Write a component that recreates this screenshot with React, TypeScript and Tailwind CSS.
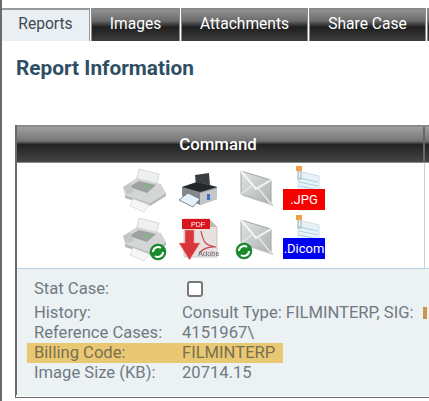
import React from "react";

const tabClass =
  "flex items-center justify-center h-[33px] pb-[2px] shrink-0 border-t-2 border-x border-[#8a8a8a] text-white text-[15.6px] bg-[linear-gradient(#929292_0%,#6a6a6a_35%,#1f1f1f_55%,#3d3d3d_100%)]";

const Badge = ({ cx, cy }: { cx: number; cy: number }) => (
  <g>
    <circle cx={cx} cy={cy} r="8" fill="#1a8c2c" stroke="#0f6a1d" strokeWidth="0.5" />
    <path
      d={`M${cx - 5} ${cy} a5 5 0 0 1 8 -4 M${cx + 5} ${cy} a5 5 0 0 1 -8 4`}
      fill="none"
      stroke="#fff"
      strokeWidth="2"
    />
  </g>
);

const Fax = ({ badge }: { badge?: boolean }) => (
  <svg width="46" height="46" viewBox="0 0 46 46" className="blur-[0.5px]">
    <path d="M17 2 L37 7 L34 20 L14 15 Z" fill="#eef0ef" stroke="#d5d8d7" />
    <path d="M1 20 L15 11 L39 17 L44 26 L28 36 L3 28 Z" fill="#d3d6d4" />
    <path d="M7 20 L17 14 L34 18 L25 26 Z" fill="#9ca29e" />
    <path d="M3 28 L28 36 L44 26 L44 29 L28 39 L3 31 Z" fill="#b4b8b6" />
    <path d="M1 20 L8 16 L12 25 L5 27 Z" fill="#c2c6c4" />
    <path d="M11 32 L27 38 L22 45 L8 39 Z" fill="#f5f6f6" stroke="#dfe1e1" />
    <path d="M22 18 L28 19 L27 21 L21 20 Z" fill="#7dbb83" />
    {badge && <Badge cx={36} cy={36} />}
  </svg>
);

const Printer = () => (
  <svg width="40" height="36" viewBox="0 0 40 36" className="blur-[0.3px]">
    <path d="M16 3 L30 1 L31 14 L17 14 Z" fill="#3a3d40" />
    <path d="M3 15 L18 10 L38 15 L38 27 L21 33 L3 24 Z" fill="#83888d" />
    <path d="M3 15 L21 20 L38 15 L18 10 Z" fill="#24272a" />
    <path d="M21 21 L38 16 L38 27 L21 33 Z" fill="#c2c6c9" />
    <path d="M9 21 L21 27 L14 35 L0 28 Z" fill="#e3f2fb" stroke="#6b7074" strokeWidth="0.8" />
    <rect x="28" y="22" width="3" height="6" fill="#3b6ec4" />
  </svg>
);

const Envelope = ({ badge }: { badge?: boolean }) => (
  <svg width="40" height="44" viewBox="0 0 40 44" className="blur-[0.4px]">
    <defs>
      <linearGradient id="env" x1="0" y1="0" x2="1" y2="1">
        <stop offset="0" stopColor="#e2e4e4" />
        <stop offset="1" stopColor="#aeb2b2" />
      </linearGradient>
    </defs>
    <path d="M6 3 L36 12 L36 36 L6 26 Z" fill="url(#env)" stroke="#a2a6a6" />
    <path d="M6 3 L21 21 L36 12" fill="none" stroke="#f4f5f5" strokeWidth="2" />
    <path d="M6 26 L18 17 M36 36 L23 20" stroke="#e6e8e8" strokeWidth="1.5" />
    <path d="M8 28 L38 38 L38 36 L36 36 L6 26 Z" fill="#c8cbcb" />
    {badge && <Badge cx={9} cy={34} />}
  </svg>
);

const Pdf = () => (
  <svg width="40" height="44" viewBox="0 0 40 44" className="blur-[0.4px]">
    <path d="M5 2 L30 2 L38 10 L38 40 L5 40 Z" fill="#e6e0df" stroke="#cfcac9" />
    <path d="M30 2 L30 10 L38 10 Z" fill="#bdb7b6" />
    <rect x="3" y="2" width="28" height="10" fill="#d8141c" />
    <text x="12" y="10" fontSize="7" fill="#fff" fontFamily="Liberation Sans, sans-serif">PDF</text>
    <path d="M22 14 C25 30 30 28 37 30 C30 29 25 31 20 36" fill="none" stroke="#c9414a" strokeWidth="1.2" />
    <text x="19" y="39" fontSize="7.5" fill="#666" fontFamily="Liberation Sans, sans-serif">Adobe</text>
    <path d="M6 13 L15 13 L15 26 L21 26 L10.5 43 L0 26 L6 26 Z" fill="#d8363b" stroke="#ee9a9a" strokeWidth="0.6" />
  </svg>
);

const Note = ({ label, color }: { label: string; color: string }) => (
  <div className="relative w-[44px] h-[48px]">
    <svg width="44" height="48" viewBox="0 0 44 48" className="blur-[0.3px]">
      <path d="M15 5 L36 10 L36 44 L15 44 Z" fill="#e7f2f8" stroke="#d4dde2" />
      <path d="M16 12 L35 16 M16 16 L35 20 M16 20 L35 24 M16 24 L35 28" stroke="#a9cfe3" strokeWidth="1" />
      <rect x="13" y="0" width="6" height="5" fill="#f0a040" />
      <path d="M15 5 L15 13 L18 13 L18 5" fill="none" stroke="#aab0b5" />
    </svg>
    <div
      className={`absolute left-0 bottom-[4px] w-[42px] h-[21px] flex items-center justify-center text-white text-[13px] leading-none ${color}`}
    >
      {label}
    </div>
  </div>
);

const rows = [
  { label: "History:", value: "Consult Type: FILMINTERP, SIG:", extra: true },
  { label: "Reference Cases:", value: "4151967\\" },
  { label: "Billing Code:", value: "FILMINTERP", hl: true },
  { label: "Image Size (KB):", value: "20714.15" },
];

export default function App() {
  return (
    <div className="w-[429px] h-[401px] overflow-hidden bg-white font-['Roboto',sans-serif] text-[15px] border-l-2 border-[#6a6a6a]">
      <div className="flex pt-[8px] h-[41px] gap-[1px]">
        <div className="flex items-center justify-center w-[88px] h-[33px] shrink-0 bg-[#e9eff3] border-t-2 border-r border-[#9a9a9a] text-[#3f4a52] text-[15.6px] pb-[2px]">
          Reports
        </div>
        <div className={`${tabClass} w-[89px]`}>Images</div>
        <div className={`${tabClass} w-[127px]`}>Attachments</div>
        <div className={`${tabClass} w-[117px]`}>Share Case</div>
        <div className={`${tabClass} w-[20px]`}></div>
      </div>

      <h1 className="mt-[15px] ml-[14px] text-[20.8px] leading-[24px] font-bold text-[#2e4f63]">
        Report Information
      </h1>

      <div className="mt-[45px] ml-[13px] w-[440px] border-l-2 border-b-4 border-double border-[#6a6a6a] h-[273px]">
        <div className="h-[38px] flex border-t-2 border-b border-[#8a8a8a] bg-[linear-gradient(#a0a0a0_0%,#757575_40%,#232323_50%,#444444_100%)] text-white text-[16.8px] font-medium">
          <div className="w-[408px] pr-[4px] flex items-center justify-center border-r-2 border-[#666]">Command</div>
        </div>

        <div className="flex h-[105px]">
          <div className="w-[408px] border-r border-[#b9d3e4] bg-white pl-[105px]">
            <div className="grid grid-cols-[46px_62px_50px_50px] justify-items-center items-center pt-[3px] h-[100px]">
              <Fax />
              <Printer />
              <Envelope />
              <Note label=".JPG" color="bg-[#f80000]" />
              <Fax badge />
              <Pdf />
              <Envelope badge />
              <Note label=".Dicom" color="bg-[#0000f0]" />
            </div>
          </div>
        </div>

        <div className="h-[128px] bg-[#ecf1f4] border-t border-[#b9d3e4] pt-[9px] pl-[10px] text-[#6f7a83] text-[16.6px]">
          <div className="flex items-center h-[22px] pl-[7px] mb-[3px]">
            <span className="w-[153px]">Stat Case:</span>
            <span className="w-[16px] h-[16px] rounded-[3px] border-2 border-[#777] bg-white"></span>
          </div>
          {rows.map((r) => (
            <div
              key={r.label}
              className={`flex items-center h-[20px] w-[256px] pl-[7px] ${r.hl ? "bg-[#e9c873] text-[#7a6f50]" : ""}`}
            >
              <span className="w-[148px] shrink-0">{r.label}</span>
              <span className="whitespace-nowrap">{r.value}</span>
              {r.extra && <span className="ml-[9px] w-[4px] h-[12px] shrink-0 bg-[#c9964a]"></span>}
            </div>
          ))}
        </div>
      </div>
    </div>
  );
}
